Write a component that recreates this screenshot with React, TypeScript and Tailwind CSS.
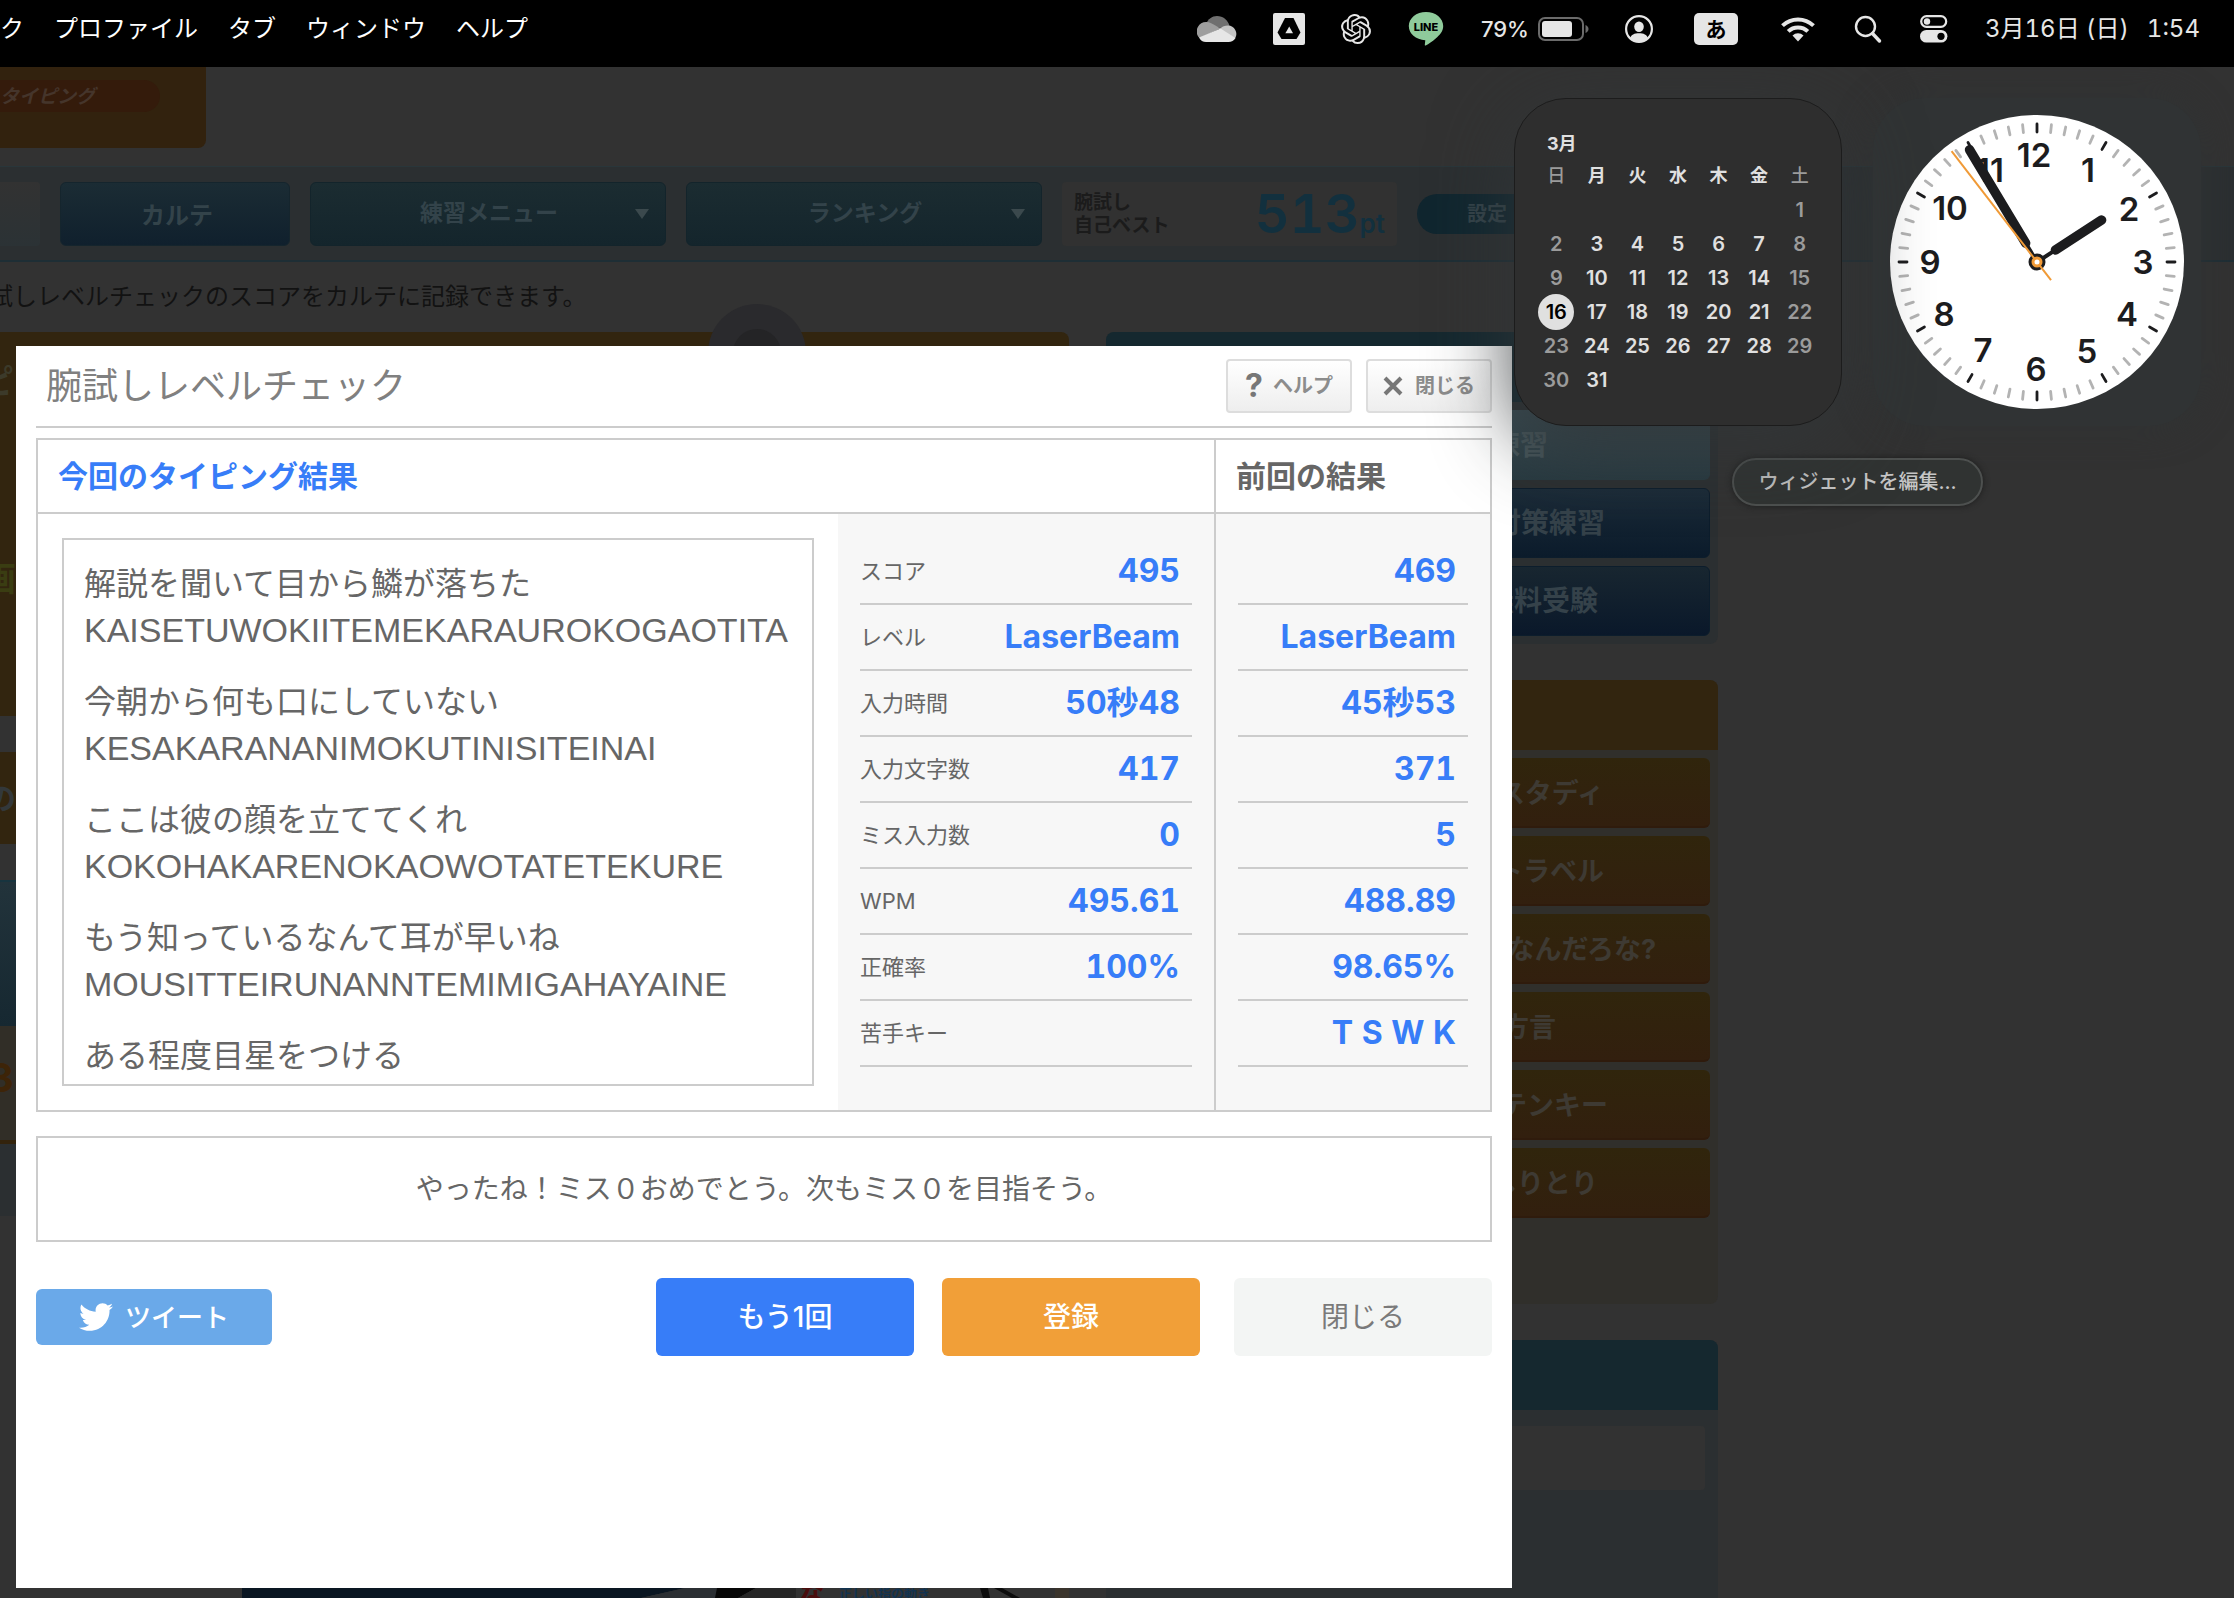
import { FaTwitter } from "react-icons/fa";
import { SiOpenai } from "react-icons/si";

const RESULTS = [
  { label: "スコア", now: "495", prev: "469" },
  { label: "レベル", now: "LaserBeam", prev: "LaserBeam" },
  { label: "入力時間", now: "50秒48", prev: "45秒53" },
  { label: "入力文字数", now: "417", prev: "371" },
  { label: "ミス入力数", now: "0", prev: "5" },
  { label: "WPM", now: "495.61", prev: "488.89" },
  { label: "正確率", now: "100%", prev: "98.65%" },
  { label: "苦手キー", now: "", prev: "T S W K" },
];

const PHRASES = [
  ["解説を聞いて目から鱗が落ちた", "KAISETUWOKIITEMEKARAUROKOGAOTITA"],
  ["今朝から何も口にしていない", "KESAKARANANIMOKUTINISITEINAI"],
  ["ここは彼の顔を立ててくれ", "KOKOHAKARENOKAOWOTATETEKURE"],
  ["もう知っているなんて耳が早いね", "MOUSITTEIRUNANNTEMIMIGAHAYAINE"],
  ["ある程度目星をつける", ""],
];

const WEEKDAYS = ["日", "月", "火", "水", "木", "金", "土"];
const WEEKS = [
  ["", "", "", "", "", "", "1"],
  ["2", "3", "4", "5", "6", "7", "8"],
  ["9", "10", "11", "12", "13", "14", "15"],
  ["16", "17", "18", "19", "20", "21", "22"],
  ["23", "24", "25", "26", "27", "28", "29"],
  ["30", "31", "", "", "", "", ""],
];

// Centre of each numeral on the dial, from 1 to 12.
const NUMERALS = [
  [51, -91],
  [92, -52],
  [106, 1],
  [90, 53],
  [50, 90],
  [-1, 108],
  [-54, 89],
  [-93, 53],
  [-107, 1],
  [-87, -53],
  [-47, -91],
  [-3, -106],
];

const PRACTICE = [
  { name: "スタディ", pad: "pr-[106px]" },
  { name: "トラベル", pad: "pr-[106px]" },
  { name: "なんだろな?", pad: "pr-[54px]" },
  { name: "方言", pad: "pr-[154px]" },
  { name: "テンキー", pad: "pr-[102px]" },
  { name: "しりとり", pad: "pr-[112px]" },
];

function MenuBar() {
  return (
    <header className="flex h-[67px] shrink-0 items-center justify-between overflow-hidden bg-black pr-[34px] pb-[9px] text-[24px] leading-none whitespace-nowrap text-white">
      <nav aria-label="メニューバー" className="-ml-[120px] flex gap-[30px]">
        <button type="button">ブックマーク</button>
        <button type="button">プロファイル</button>
        <button type="button">タブ</button>
        <button type="button">ウィンドウ</button>
        <button type="button">ヘルプ</button>
      </nav>
      <div className="flex items-center gap-9 text-[#e6e6e6]">
        <svg width="40" height="26" viewBox="0 0 40 26" aria-label="OneDrive">
          <path d="M9 8C11 3 15 0 20 0c6 0 11 4 12.500 10L23 12 9 8z" fill="#6f6f6f" />
          <path d="M1.500 21A9.500 9.500 0 0 1 9.500 6c3 0 5.500 1.500 8 3l6 3.500L3 22z" fill="#9e9e9e" />
          <path d="M23 12.500C25 10.500 28 9.500 31 9.500a8.500 8.500 0 0 1 7 13L22 13z" fill="#c4c4c4" />
          <path d="M2 21.500 23.500 12.500 38.500 22c-1.500 2.500-4 4-7 4H9c-3 0-5.500-1.500-7-4.500z" fill="#e6e6e6" />
        </svg>
        <svg width="32" height="32" viewBox="0 0 32 32" aria-label="Google Drive">
          <rect width="32" height="32" rx="2" fill="#e6e6e6" />
          <path d="M12 5h8.500L27.500 19.500 23.500 26H8.500L4.500 19.500z" fill="#000" />
          <path d="M16.200 13.500 20 20.200h-7.600z" fill="#e6e6e6" />
        </svg>
        <SiOpenai size={30} />
        <svg width="38" height="36" viewBox="1 0 38 36" aria-label="LINE">
          <path d="M20 1c9.600 0 17.200 6.200 17.200 14 0 5.500-3.500 9-7.500 12.500-3.500 3-7 5.500-10 7-1 .4-1-.5-.8-1.500l.4-3.800C9.700 28.600 2.800 22.800 2.800 15 2.800 7.200 10.400 1 20 1z" fill="#8fcb9b" />
          <text x="20" y="20" textAnchor="middle" fontSize="11" fontWeight="800" fontFamily="Inter, sans-serif" fill="#000">LINE</text>
        </svg>
        <div className="flex items-center gap-[9px]">
          <span className="text-[22px] font-medium">79%</span>
          <svg width="51" height="24" viewBox="0 0 51 24" aria-label="バッテリー">
            <rect x="1" y="1" width="44" height="22" rx="6" fill="none" stroke="#6b6b6b" strokeWidth="2" />
            <rect x="4" y="4" width="30" height="16" rx="3" fill="#e6e6e6" />
            <path d="M47.500 8c4 1.500 4 6.500 0 8z" fill="#6b6b6b" />
          </svg>
        </div>
        <svg width="28" height="28" viewBox="0 0 28 28" aria-label="ユーザ">
          <circle cx="14" cy="14" r="12.900" fill="none" stroke="#e6e6e6" strokeWidth="2.200" />
          <ellipse cx="14" cy="11.700" rx="4.800" ry="5.200" fill="#e6e6e6" />
          <path d="M5 23.500c1-4 4.500-5.300 9-5.300s8 1.300 9 5.300a13 13 0 0 1-18 0z" fill="#e6e6e6" />
        </svg>
        <div className="flex w-[54px] justify-center">
          <span className="flex h-8 w-11 items-center justify-center rounded-[5px] bg-[#e6e6e6] text-[21px] font-bold text-black">あ</span>
        </div>
        <svg width="38" height="26" viewBox="0 0 38 26" aria-label="Wi-Fi">
          <g fill="none" stroke="#e6e6e6" strokeWidth="4">
            <path d="M3.500 9.600a22.500 22.500 0 0 1 31 0" />
            <path d="M9.200 15.400a14.200 14.200 0 0 1 19.600 0" />
          </g>
          <path d="M19 25.500 13.500 19.500a8 8 0 0 1 11 0z" fill="#e6e6e6" />
        </svg>
        <svg width="30" height="30" viewBox="0 0 30 30" aria-label="検索" fill="none" stroke="#e6e6e6">
          <circle cx="12.500" cy="12.500" r="9.500" strokeWidth="2.400" />
          <path d="m19.500 19.500 7 7.500" strokeWidth="3.400" strokeLinecap="round" />
        </svg>
        <svg width="30" height="28" viewBox="0 0 30 28" aria-label="コントロールセンター">
          <rect x="2.200" y="1.200" width="25" height="10.600" rx="5.300" fill="none" stroke="#e6e6e6" strokeWidth="2.200" />
          <circle cx="8" cy="6.500" r="3.200" fill="#e6e6e6" />
          <rect x="1" y="15" width="27.400" height="12.600" rx="6.300" fill="#e6e6e6" />
          <circle cx="22" cy="21.300" r="3.600" fill="#000" />
        </svg>
        <time className="flex gap-[18px] tabular-nums">
          <span>3月16日 (日)</span>
          <span>1:54</span>
        </time>
      </div>
    </header>
  );
}

function SitePage() {
  return (
    <div className="flex flex-1 flex-col overflow-hidden whitespace-nowrap">
      <div className="h-[99px]">
        <div className="h-[81px] w-[206px] overflow-hidden rounded-br-lg bg-[#32220e] pt-[13px]">
          <div className="h-8 w-[160px] rounded-r-2xl bg-[#341b0b] text-[19px] leading-[33px] font-bold text-[#45352b] italic">タイピング</div>
        </div>
      </div>
      <nav aria-label="サイト" className="flex h-24 items-center gap-5 border-t border-b-2 border-t-[#29363a] border-b-[#1e2e35] bg-[#2b2f31] text-[23px] font-bold text-[#33434a]">
        <div className="h-16 w-10 rounded-r bg-gradient-to-b from-[#323232] to-[#2b3235]" />
        <button type="button" className="h-16 w-[230px] rounded-md border border-[#15252d] bg-gradient-to-b from-[#1b2c34] to-[#10202d] pt-1 pl-1 text-[24px]">カルテ</button>
        {["練習メニュー", "ランキング"].map((name) => (
          <button key={name} type="button" className="flex h-16 w-[356px] items-center justify-end rounded-md border border-[#13242b] bg-gradient-to-b from-[#1b2c31] to-[#14252c] pr-4">
            <span className="flex-1 pl-8 text-center">{name}</span>
            <svg width="14" height="10" viewBox="0 0 14 10" aria-hidden="true">
              <path d="M0 0h14L7 10z" fill="#3b494d" />
            </svg>
          </button>
        ))}
        <div className="flex h-16 w-[335px] items-center justify-between rounded bg-[#313131] pr-3 pl-3 text-[19px] leading-[23px] font-bold text-[#1b1b1b]">
          <p>
            腕試し
            <br />
            自己ベスト
          </p>
          <p className="text-[54px] leading-none font-semibold text-[#12303e] tabular-nums">
            513<span className="text-[26px]">pt</span>
          </p>
        </div>
        <button type="button" className="h-10 w-[140px] rounded-full bg-[#10262f] text-[20px]">設定</button>
      </nav>
      <p className="-ml-[11px] h-[70px] text-[24px] leading-[70px] text-[#121212]">試しレベルチェックのスコアをカルテに記録できます。</p>
      <div className="flex flex-1 gap-[37px] pr-[516px]">
        <div className="relative flex flex-1 flex-col">
          <section className="flex h-[384px] flex-col gap-[146px] rounded-tr-lg bg-[#32250f] pt-[24px] text-[34px] font-bold">
            <span className="-ml-[20px] text-[#3c3a2a]">ピ</span>
            <span className="-ml-[18px] text-[#3a3d12]">画</span>
          </section>
          <svg className="absolute -top-7 left-[708px]" width="98" height="98" viewBox="0 0 98 98" aria-hidden="true">
            <circle cx="49" cy="49" r="49" fill="#2a2a2d" />
            <circle cx="49" cy="49" r="24" fill="#242426" />
          </svg>
          <section className="mt-9 flex h-[92px] items-center bg-[#32250f] text-[30px] font-bold text-[#33383a]">
            <span className="-ml-[14px]">の</span>
          </section>
          <section className="mt-9 h-[146px] border-t-2 border-[#17343f] bg-gradient-to-b from-[#22333b] to-[#162831]" />
          <section className="h-[118px] border-b-4 border-[#33230c] bg-[#312e27] pt-8 text-[40px] leading-none font-bold text-[#3d2408]">
            <span className="-ml-[12px]">3</span>
          </section>
          <section className="h-[72px] bg-[#2b2f31]" />
          <svg className="mt-auto ml-[242px]" width="827" height="10" viewBox="0 0 827 10" aria-hidden="true">
            <path d="M0 0h443l-44 10H0z" fill="#0a1622" />
            <path d="M443 0h32v10h-76z" fill="#2b2f33" />
            <path d="M475 0h39l-18 10h-23z" fill="#070707" />
            <path d="M514 0h40v10h-58z" fill="#262626" />
            <text x="558" y="14" fontSize="24" fontWeight="900" fill="#4a0d0d">な</text>
            <text x="597" y="10" fontSize="13" fontWeight="700" fill="#12324f">正しい指の動き</text>
            <path d="M738 0h8l2 10h-7zM752 0h8l18 10h-8z" fill="#0c0c0c" />
            <path d="M813 0h14v10h-14z" fill="#3a342c" />
          </svg>
        </div>
        <aside className="flex w-[612px] flex-col gap-9 font-bold text-[#3e3a33]">
          <section className="flex h-[312px] flex-col gap-2 rounded-lg bg-[#2b2f31] px-2 text-[28px] text-[#35424a]">
            <h2 className="-mx-2 h-[70px] rounded-t-lg bg-[#15282f]" />
            <button type="button" className="h-[70px] shrink-0 rounded-md bg-gradient-to-b from-[#384a51] to-[#283a41] pr-[162px] text-right text-[#46555a]">英語練習</button>
            <button type="button" className="h-[70px] shrink-0 rounded-md border border-[#0c1d2c] bg-gradient-to-b from-[#1b2b38] to-[#0b1b2b] pr-[104px] text-right">対策練習</button>
            <button type="button" className="h-[70px] shrink-0 rounded-md border border-[#0c1d2c] bg-gradient-to-b from-[#182630] to-[#0a182a] pr-[111px] text-right">無料受験</button>
          </section>
          <section className="flex h-[624px] flex-col gap-2 rounded-lg bg-[#302f2b] px-2 text-[27px]">
            <h2 className="-mx-2 h-[70px] shrink-0 rounded-t-lg bg-[#32250f]" />
            {PRACTICE.map(({ name, pad }) => (
              <button key={name} type="button" className={`h-[70px] shrink-0 rounded-md border-b-2 border-[#2f1b0c] bg-gradient-to-b from-[#30250c] to-[#321f0e] pt-1 text-right ${pad}`}>
                {name}
              </button>
            ))}
          </section>
          <section className="flex flex-1 flex-col gap-4 rounded-t-lg bg-[#2b2f31] px-[13px]">
            <h2 className="-mx-[13px] h-[70px] rounded-t-lg bg-[#15282f]" />
            <div className="h-16 rounded bg-[#323232]" />
          </section>
        </aside>
      </div>
    </div>
  );
}

function ResultDialog() {
  return (
    <section role="dialog" aria-label="腕試しレベルチェック" className="absolute top-[279px] right-[722px] bottom-[10px] left-4 bg-white px-5 text-[#666]">
      <header className="flex h-[82px] items-center justify-between border-b-2 border-[#ccc]">
        <h1 className="pl-[10px] text-[36px] leading-none text-[#808080]">腕試しレベルチェック</h1>
        <div className="flex gap-[14px] text-[20px] font-bold text-[#8c8c8c]">
          <button type="button" className="flex h-[54px] w-[126px] items-center justify-center gap-[10px] rounded border-2 border-[#ddd] bg-gradient-to-b from-white to-[#eee]">
            <span className="text-[32px] leading-none text-[#777]">?</span>ヘルプ
          </button>
          <button type="button" className="flex h-[54px] w-[126px] items-center justify-center gap-[12px] rounded border-2 border-[#ddd] bg-gradient-to-b from-white to-[#eee]">
            <svg width="20" height="20" viewBox="0 0 20 20" aria-hidden="true">
              <path d="m2 2 16 16M18 2 2 18" stroke="#777" strokeWidth="4" />
            </svg>
            閉じる
          </button>
        </div>
      </header>

      <div className="mt-[10px] border-2 border-[#ccc]">
        <div className="flex h-[74px] border-b-2 border-[#ccc] text-[30px] leading-[72px] font-bold">
          <h2 className="flex-1 pl-5 text-[#377df8]">今回のタイピング結果</h2>
          <h2 className="w-[276px] border-l-2 border-[#ccc] pl-5">前回の結果</h2>
        </div>
        <div className="flex">
          <div className="m-6 h-[548px] flex-1 overflow-hidden border-2 border-[#ccc] p-5 leading-[47px]">
            {PHRASES.map(([ja, romaji]) => (
              <p key={ja} className="mb-6 text-[32px]">
                {ja}
                <br />
                <span className="font-['Liberation_Sans',sans-serif] text-[34px]">{romaji}</span>
              </p>
            ))}
          </div>
          <div className="w-[376px] bg-[#f7f7f7] px-[22px] pt-6">
            <table className="w-full" aria-label="今回のタイピング結果">
              <tbody>
                {RESULTS.map((r) => (
                  <tr key={r.label} className="h-[66px] border-b-2 border-[#ccc]">
                    <th scope="row" className="text-left text-[22px] leading-none font-normal">{r.label}</th>
                    <td className="pr-3 text-right text-[32px] leading-none font-bold text-[#377df8] tabular-nums">{r.now}</td>
                  </tr>
                ))}
              </tbody>
            </table>
          </div>
          <div className="w-[276px] border-l-2 border-[#ccc] bg-[#f7f7f7] px-[22px] pt-6">
            <table className="w-full" aria-label="前回の結果">
              <tbody>
                {RESULTS.map((r) => (
                  <tr key={r.label} className="h-[66px] border-b-2 border-[#ccc]">
                    <td className="pr-3 text-right text-[32px] leading-none font-bold text-[#377df8] tabular-nums">{r.prev}</td>
                  </tr>
                ))}
              </tbody>
            </table>
          </div>
        </div>
      </div>

      <p className="mt-6 flex h-[106px] items-center justify-center border-2 border-[#ccc] text-[28px]">やったね！ミス０おめでとう。次もミス０を目指そう。</p>

      <footer className="mt-9 flex items-center justify-between text-[28px]">
        <button type="button" className="flex h-14 w-[236px] items-center justify-center gap-3 rounded-md bg-[#6aa9e9] text-[26px] font-medium text-white">
          <FaTwitter size={34} />
          ツイート
        </button>
        <div className="flex gap-7">
          <button type="button" className="h-[78px] w-[258px] rounded-md bg-[#377df8] font-medium text-white">もう1回</button>
          <button type="button" className="h-[78px] w-[258px] rounded-md bg-[#f19f38] font-medium text-white">登録</button>
          <button type="button" className="ml-[6px] h-[78px] w-[258px] rounded-md bg-[#f3f5f4] text-[#7a7a7a]">閉じる</button>
        </div>
      </footer>
    </section>
  );
}

function Calendar() {
  return (
    <div className="relative z-10 h-[328px] w-[328px] rounded-[52px] border border-[#1c1c1c] bg-[#2e2e2e] px-[21px] pt-[32px] text-[20px] font-semibold text-[#e0e0e0] shadow-[0_16px_80px_rgba(50,54,56,0.9)]">
      <h2 className="h-[28px] pl-[11px] text-[18px] leading-[26px] font-bold">3月</h2>
      <table className="w-full table-fixed text-center leading-none" aria-label="3月">
        <thead>
          <tr className="h-[34px] text-[18px]">
            {WEEKDAYS.map((d) => (
              <th key={d} scope="col" className="font-bold first:font-medium first:text-[#9b9b9b] last:font-medium last:text-[#9b9b9b]">{d}</th>
            ))}
          </tr>
        </thead>
        <tbody>
          {WEEKS.map((week, w) => (
            <tr key={w} className="h-[34px]">
              {week.map((day, i) => (
                <td key={i} className="first:text-[#9b9b9b] last:text-[#9b9b9b]">
                  {day === "16" ? (
                    <span className="mx-auto -my-px flex h-9 w-9 items-center justify-center rounded-full bg-[#e0e0e0] text-black">16</span>
                  ) : (
                    day
                  )}
                </td>
              ))}
            </tr>
          ))}
        </tbody>
      </table>
    </div>
  );
}

function Clock() {
  const ticks = Array.from({ length: 60 }, (_, i) => i);
  return (
    <div className="flex h-[328px] w-[328px] items-center justify-center rounded-[52px] bg-[#303334] shadow-[0_0_36px_#303334]">
      <svg width="294" height="294" viewBox="-147 -147 294 294" role="img" aria-label="1:54">
        <circle r="147" fill="#fff" />
        {ticks.map((i) => (
          <line key={i} y1="-138" y2="-130" strokeWidth="2.800" strokeLinecap="round" stroke={i % 5 ? "#b3b3b3" : "#1c1c1e"} transform={`rotate(${i * 6})`} />
        ))}
        {NUMERALS.map(([x, y], i) => (
          <text key={i} x={x} y={y + 11} textAnchor="middle" fontSize="33" fontWeight="600" fontFamily="Inter, sans-serif" fill="#1c1c1e">
            {i + 1}
          </text>
        ))}
        <g stroke="#1c1c1e" strokeLinecap="round">
          <g transform="rotate(57)">
            <path d="M0 0V-24" strokeWidth="4" />
            <path d="M0-22V-77" strokeWidth="9.500" />
          </g>
          <g transform="rotate(-31)">
            <path d="M0 0V-24" strokeWidth="4" />
            <path d="M0-22V-131" strokeWidth="9.500" />
          </g>
        </g>
        <circle r="8.500" fill="#1c1c1e" />
        <path d="M0 23V-140" stroke="#f09a37" strokeWidth="2" transform="rotate(-37.600)" />
        <circle r="4" fill="#fff" stroke="#f09a37" strokeWidth="3" />
      </svg>
    </div>
  );
}

export default function App() {
  return (
    <div lang="ja" className="flex min-h-screen flex-col overflow-hidden bg-[#323232] font-['Inter','Noto_Sans_CJK_JP',sans-serif]">
      <MenuBar />
      <main className="relative flex flex-1 flex-col overflow-hidden">
        <SitePage />
        <ResultDialog />
        <aside aria-label="ウィジェット" className="absolute top-[31px] right-[33px] flex flex-col items-center gap-8">
          <div className="flex gap-[31px]">
            <Calendar />
            <Clock />
          </div>
          <button type="button" className="h-12 rounded-full border-2 border-[#4d504f] bg-[#303332] px-6 text-[20px] font-medium text-[#c6c6c6] shadow-[0_0_6px_#1c1c1c]">ウィジェットを編集...</button>
        </aside>
      </main>
    </div>
  );
}
